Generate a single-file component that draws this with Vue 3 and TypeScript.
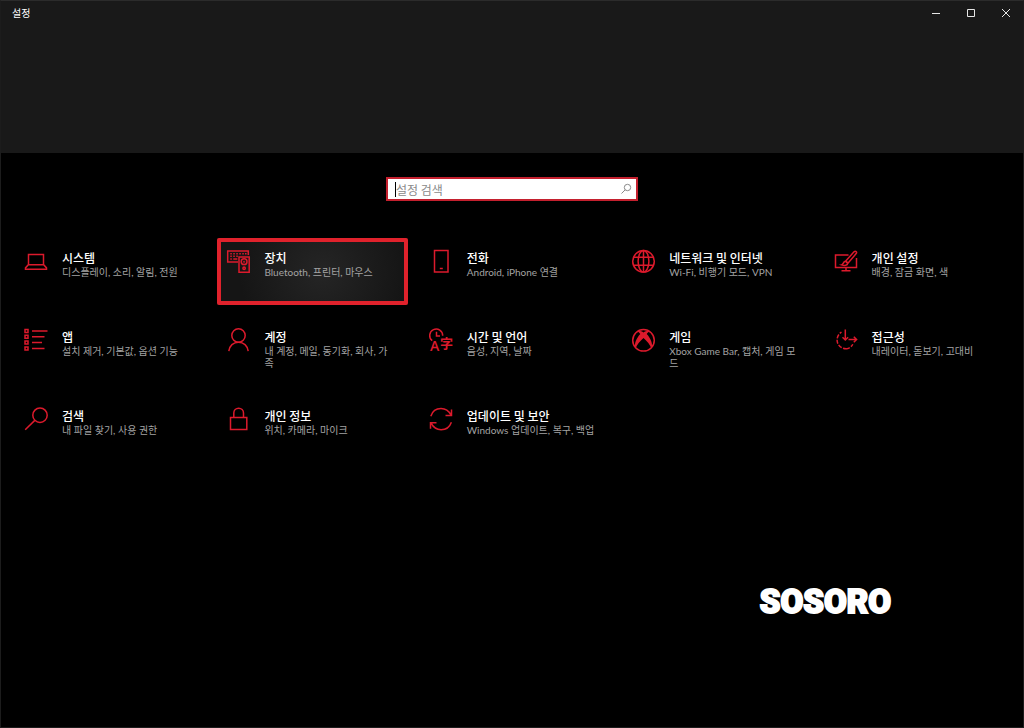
<script setup lang="ts">
interface Category {
  id: string
  title: string
  detail: string
  marked?: boolean
}

const categories: Category[] = [
  { id: 'system', title: '시스템', detail: '디스플레이, 소리, 알림, 전원' },
  { id: 'devices', title: '장치', detail: 'Bluetooth, 프린터, 마우스', marked: true },
  { id: 'phone', title: '전화', detail: 'Android, iPhone 연결' },
  { id: 'network', title: '네트워크 및 인터넷', detail: 'Wi-Fi, 비행기 모드, VPN' },
  { id: 'personal', title: '개인 설정', detail: '배경, 잠금 화면, 색' },
  { id: 'apps', title: '앱', detail: '설치 제거, 기본값, 옵션 기능' },
  { id: 'accounts', title: '계정', detail: '내 계정, 메일, 동기화, 회사, 가족' },
  { id: 'time', title: '시간 및 언어', detail: '음성, 지역, 날짜' },
  { id: 'gaming', title: '게임', detail: 'Xbox Game Bar, 캡처, 게임 모드' },
  { id: 'access', title: '접근성', detail: '내레이터, 돋보기, 고대비' },
  { id: 'search', title: '검색', detail: '내 파일 찾기, 사용 권한' },
  { id: 'privacy', title: '개인 정보', detail: '위치, 카메라, 마이크' },
  { id: 'update', title: '업데이트 및 보안', detail: 'Windows 업데이트, 복구, 백업' },
]
</script>

<template>
  <div class="window">
    <header class="top">
      <span class="caption">설정</span>
      <div class="controls">
        <button type="button" aria-label="최소화">
          <svg width="10" height="10" viewBox="0 0 10 10"><path d="M1 5.5h8" /></svg>
        </button>
        <button type="button" aria-label="최대화">
          <svg width="10" height="10" viewBox="0 0 10 10"><path d="M1.500 1.500h7v7h-7z" /></svg>
        </button>
        <button type="button" aria-label="닫기">
          <svg width="10" height="10" viewBox="0 0 10 10"><path d="M1 1l8 8M9 1l-8 8" /></svg>
        </button>
      </div>
    </header>

    <main class="content">
      <form class="search" role="search" @submit.prevent>
        <span class="caret"></span>
        <input type="text" aria-label="설정 검색" placeholder="설정 검색" />
        <button type="submit" aria-label="검색">
          <svg width="12" height="12" viewBox="0 0 12 12"><circle cx="7.5" cy="4.5" r="3.2" /><path d="M5.2 6.8L1.5 10.5" /></svg>
        </button>
      </form>

      <nav class="grid" aria-label="설정 범주">
        <a v-for="c in categories" :key="c.id" href="#" class="card" :class="{ marked: c.marked }">
          <svg class="icon" width="24" height="24" viewBox="0 0 24 24" aria-hidden="true">
            <g v-if="c.id === 'system'">
              <path d="M4.5 15.5V5.500h15v10M4.300 15.700h15.400l2.800 3.200v1.300h-21v-1.300z" />
            </g>
            <g v-else-if="c.id === 'devices'">
              <path d="M12 13H1.700V2h20.600v4M4.300 4.700h1.500M7.300 4.700h1.500M10.300 4.700h1.500M13.300 4.700h1.500M16.300 4.700h1.500M19 4.700h1.500M4.300 7.300h1.500M7.300 7.300h1.500M10.300 7.300h1.500M4.300 10h1.500M7.300 10h4" />
              <path d="M13 8h10.200v15.200H13z" />
              <circle cx="18.100" cy="12.700" r="2.900" />
              <circle cx="18.100" cy="12.700" r=".3" />
              <circle cx="18.100" cy="19.200" r="1.200" />
            </g>
            <g v-else-if="c.id === 'phone'">
              <path d="M5.500 1.500h13.500v21.500H5.500zM10.800 19.500h3" />
            </g>
            <g v-else-if="c.id === 'network'">
              <circle cx="12.500" cy="12.300" r="10.800" />
              <ellipse cx="12.500" cy="12.300" rx="5.400" ry="10.800" />
              <path d="M12.500 1.500v21.600M2.700 8.300h19.600M2.700 16.300h19.600" />
            </g>
            <g v-else-if="c.id === 'personal'">
              <path d="M14.500 6H1.500v12.500h21V9M12 18.500v3M7.500 21.800h9" />
              <path d="M11.500 12.300L20 2.800c1.600-1.300 3.300.2 2.200 1.800l-8.500 9.800M11.500 12.300c-2.500.2-1.800 3-4 3.600 3 .9 6.100.8 6.200-1.500zM12 12l2 2.200" />
            </g>
            <g v-else-if="c.id === 'apps'">
              <path d="M1 1.500h3v3H1zM1 7.300h3v3H1zM1 13.100h3v3H1zM1 18.900h3v3H1zM8 3h15.500M8 8.800h12.500M8 14.600h10M8 20.400h12.500" />
            </g>
            <g v-else-if="c.id === 'accounts'">
              <circle cx="12.500" cy="7.500" r="6.700" />
              <path d="M2.800 23.200c.6-5.600 4.600-9 9.700-9s9.100 3.400 9.700 9" />
            </g>
            <g v-else-if="c.id === 'time'">
              <path d="M3.200 12.700A6.500 6.500 0 1 1 13.700 7.800M7.500 3.800V8h3.500" />
              <text x="1" y="23" class="latin">A</text>
              <text x="11" y="20" class="hanja">字</text>
            </g>
            <g v-else-if="c.id === 'gaming'">
              <circle cx="12.500" cy="12.300" r="10.800" />
              <path class="solid" d="M6 3.200C8.500 2.200 10.800 3.400 12.500 4.500c1.700-1.100 4-2.300 6.500-1.300-1.200.3-2.300 1.400-3.300 2.700 3.800 4 6.800 10.400 4.600 14.700C19.300 16.900 16 13 12.500 10 9 13 5.700 16.900 4.700 20.600 2.500 16.300 5.500 9.900 9.300 5.900 8.300 4.600 7.200 3.500 6 3.200z" />
            </g>
            <g v-else-if="c.id === 'access'">
              <path d="M13 20.800A9 9 0 0 1 7.500 4.100" stroke-dasharray="4 1.500" />
              <path d="M13 20.800a9 9 0 0 0 6-5" stroke-dasharray="3 1.500" />
              <path d="M11.300 1.500v10.500M8.500 9.200l2.800 2.800 2.800-2.800M14.500 11.500h8M19.800 8.700l2.800 2.800-2.800 2.800" />
            </g>
            <g v-else-if="c.id === 'search'">
              <circle cx="16" cy="8.200" r="7.200" />
              <path d="M10.800 13.400L1.200 22.800" />
            </g>
            <g v-else-if="c.id === 'privacy'">
              <path d="M4.500 10.500h16.300v12H4.500zM7.800 10.500V6a4.800 4.800 0 0 1 9.700 0v4.500" />
            </g>
            <g v-else>
              <path d="M1.800 9.200C3.300 4.500 7.300 1.500 12 1.500c4.300 0 8 2.600 10 6.500M22.500 2.500v6h-6M22.400 15.200c-1.600 4.500-5.600 7.500-10.300 7.500-4.300 0-8-2.600-10-6.500M1.500 21.700v-6h6" />
            </g>
          </svg>
          <span class="text">
            <span class="title">{{ c.title }}</span>
            <span class="detail">{{ c.detail }}</span>
          </span>
        </a>
      </nav>

      <p class="brand">SOSORO</p>
    </main>
  </div>
</template>

<style>
body {
  margin: 0;
  background: #000;
}
</style>

<style scoped>
.window {
  box-sizing: border-box;
  min-height: 100vh;
  display: flex;
  flex-direction: column;
  background: #000;
  color: #fff;
  border: 1px solid #1c1c1c;
  border-top-color: #2b2b2b;
  font-family: "Noto Sans CJK KR", sans-serif;
}

.top {
  height: 152px;
  display: flex;
  justify-content: space-between;
  align-items: flex-start;
  background: #191919;
}

.caption {
  padding-left: 11px;
  font-size: 10px;
  line-height: 24px;
}

.controls {
  display: flex;
}

.controls button {
  width: 35px;
  height: 24px;
  padding: 0;
  display: grid;
  place-items: center;
  border: 0;
  background: none;
}

.controls svg {
  fill: none;
  stroke: #e6e6e6;
  stroke-width: 1;
}

.content {
  flex: 1;
  display: flex;
  flex-direction: column;
  padding-top: 24px;
}

.search {
  box-sizing: border-box;
  width: 252px;
  height: 24px;
  align-self: center;
  display: flex;
  align-items: center;
  padding: 0 4px 0 7px;
  background: #fff;
  border: 2px solid #c4202e;
}

.caret {
  width: 1px;
  height: 15px;
  background: #000;
}

.search input {
  flex: 1;
  min-width: 0;
  height: 18px;
  padding: 0;
  border: 0;
  outline: 0;
  background: none;
  color: #222;
  font-family: inherit;
  font-size: 12px;
}

.search input::placeholder {
  color: #8a8a8a;
}

.search button {
  width: 12px;
  height: 12px;
  padding: 0;
  display: flex;
  border: 0;
  background: none;
}

.search svg {
  fill: none;
  stroke: #8a8a8a;
  stroke-width: 1;
}

.grid {
  display: grid;
  grid-template-columns: repeat(5, 1fr);
  gap: 12px;
  padding: 37px 8px 0 14px;
}

.card {
  box-sizing: border-box;
  min-height: 67px;
  display: flex;
  align-items: flex-start;
  gap: 14px;
  padding: 11px 12px 0 9px;
  color: inherit;
  text-decoration: none;
}

.marked {
  background: radial-gradient(circle at 55% 50%, #252525, #151515 75%);
  box-shadow: inset 0 0 0 4px #e0222c;
  border-radius: 2px;
}

.icon {
  flex: none;
  overflow: visible;
  fill: none;
  stroke: #dc1a2c;
  stroke-width: 1.5;
}

.icon .solid,
.icon text {
  fill: #dc1a2c;
  stroke: none;
}

.latin {
  font-family: "Open Sans", sans-serif;
  font-size: 14px;
  font-weight: 600;
}

.hanja {
  font-family: "Noto Sans CJK KR", sans-serif;
  font-size: 13px;
  font-weight: 700;
}

.text {
  display: flex;
  flex-direction: column;
  min-width: 0;
  padding-top: 1px;
}

.title {
  font-size: 12px;
  font-weight: 500;
  line-height: 16px;
}

.detail {
  color: #a3a3a3;
  font-family: Lato, "Noto Sans CJK KR", sans-serif;
  font-size: 10px;
  line-height: 12px;
}

.brand {
  align-self: flex-end;
  margin: 118px 132px 0 0;
  font-family: Roboto, sans-serif;
  font-size: 33px;
  font-weight: 900;
  line-height: 42px;
  -webkit-text-stroke: 2px #fff;
}
</style>
